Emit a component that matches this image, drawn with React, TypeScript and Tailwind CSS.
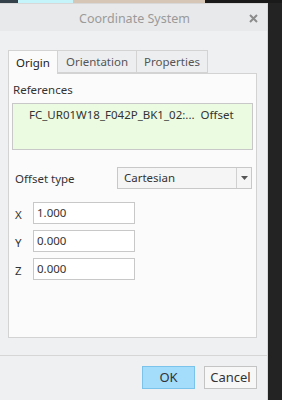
export default function App() {
  const font = { fontFamily: '"Noto Sans", "Open Sans", sans-serif' };

  return (
    <div className="w-[282px] h-[400px] flex flex-col bg-[#1f1f1f] overflow-hidden" style={font}>
      {/* background behind the dialog */}
      <div className="h-[3px] flex shrink-0">
        <div className="w-[18px] bg-[#34414a]" />
        <div className="w-[55px] bg-[#c6f4fb]" />
        <div className="w-[132px] bg-[#d6c6b6]" />
        <div className="flex-1 bg-[#1a1a1a]" />
      </div>

      <div className="flex flex-1">
        {/* dialog */}
        <div className="w-[268px] flex flex-col bg-[#eef0f1] border-t border-r border-[#d8d8d8]">
          <div className="h-[27px] flex items-center relative bg-[#e8e9ea] pt-[4px]">
            <div className="flex-1 text-center text-[12.5px] text-[#9a9a9a] pl-[2px]">Coordinate System</div>
            <svg className="absolute right-[9px] top-[10px]" width="9" height="9" viewBox="0 0 9 9">
              <path d="M1 1 L8 8 M8 1 L1 8" stroke="#8c8c8c" strokeWidth="2" />
            </svg>
          </div>

          <div className="flex flex-col pl-[8px] pr-[10px] pt-[19px]">
            {/* tabs */}
            <div className="flex h-[23px] text-[11.5px]">
              <div className="w-[50px] flex items-center justify-center bg-[#fbfbfb] border border-b-0 border-[#d3d3d3] text-[#222] relative z-10 h-[24px]">
                Origin
              </div>
              <div className="w-[79px] flex items-center justify-center bg-[#eceef0] border border-l-0 border-[#d3d3d3] text-[#555]">
                Orientation
              </div>
              <div className="w-[71px] flex items-center justify-center bg-[#eceef0] border border-l-0 border-[#d3d3d3] text-[#555]">
                Properties
              </div>
            </div>

            {/* panel */}
            <div className="h-[265px] bg-[#fbfbfb] border border-[#d3d3d3] px-[3px] pt-[8px] text-[11.5px] text-[#333]">
              <div className="leading-[16px] pl-[1px]">References</div>
              <div className="mt-[5px] h-[47px] bg-[#ebfbe1] border border-[#c8c8c8] pl-[16px] pt-[3px] text-[#333] leading-[16px] whitespace-nowrap">
                FC_UR01W18_F042P_BK1_02:...&nbsp; Offset
              </div>

              <div className="mt-[17px] flex items-center h-[22px] pl-[3px]">
                <div className="w-[102px] pt-[2px]">Offset type</div>
                <div className="flex-1 h-[22px] flex border border-[#c8c8c8] bg-[#f5f5f5] mr-[1px]">
                  <div className="flex-1 pl-[6px] flex items-center">Cartesian</div>
                  <div className="w-[15px] border-l border-[#d0d0d0] flex items-center justify-center">
                    <svg width="7" height="4" viewBox="0 0 7 4">
                      <path d="M0 0 L7 0 L3.5 4 Z" fill="#555" />
                    </svg>
                  </div>
                </div>
              </div>

              <div className="mt-[13px] flex flex-col gap-[6px] pl-[3px]">
                {[
                  ['X', '1.000'],
                  ['Y', '0.000'],
                  ['Z', '0.000'],
                ].map(([k, v]) => (
                  <div key={k} className="flex items-center h-[22px]">
                    <div className="w-[18px] pt-[3px]">{k}</div>
                    <div className="w-[102px] h-[22px] border border-[#c8c8c8] bg-white pl-[3px] flex items-center">
                      {v}
                    </div>
                  </div>
                ))}
              </div>
            </div>
          </div>

          <div className="mt-[17px] border-t border-[#d6d6d6]" />

          <div className="flex justify-end gap-[9px] pr-[10px] pt-[10px] text-[13px] text-[#333]">
            <div className="w-[53px] h-[23px] flex items-center justify-center bg-[#a4dcfb] border border-[#7cc3ec]">
              OK
            </div>
            <div className="w-[53px] h-[23px] flex items-center justify-center bg-[#f7f7f7] border border-[#c4c4c4]">
              Cancel
            </div>
          </div>
        </div>

        <div className="flex-1 bg-[#232323]" />
      </div>
    </div>
  );
}
